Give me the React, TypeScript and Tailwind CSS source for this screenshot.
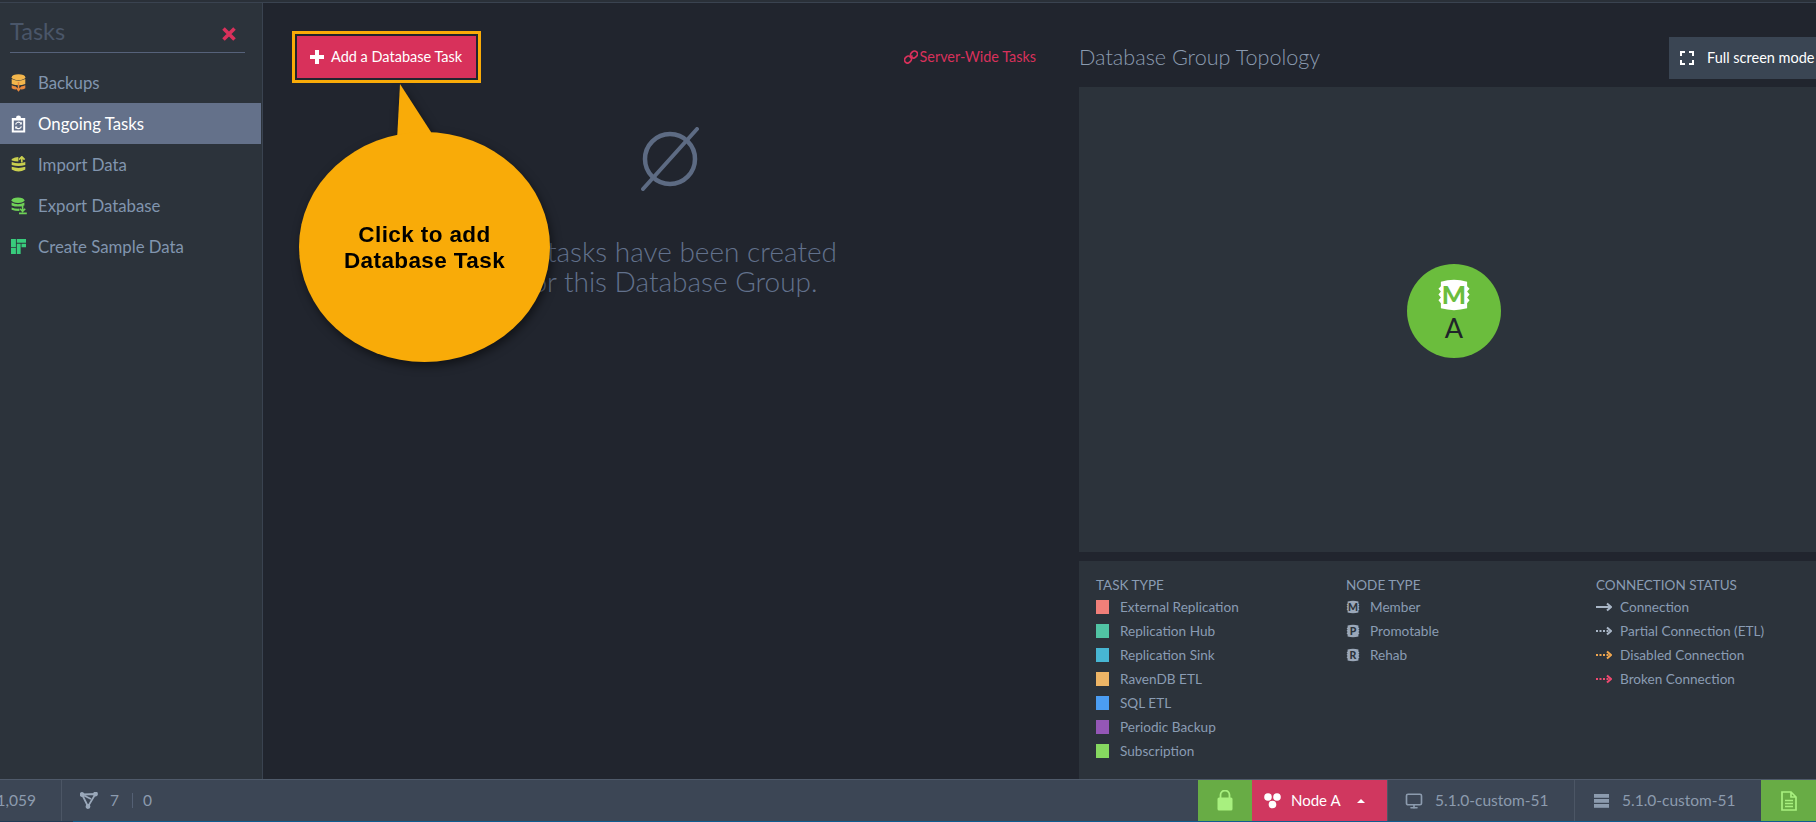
import { Monitor } from "lucide-react";

const legendTasks = [
  { name: "External Replication", color: "bg-[#f07f79]" },
  { name: "Replication Hub", color: "bg-[#51c4a4]" },
  { name: "Replication Sink", color: "bg-[#47b6d3]" },
  { name: "RavenDB ETL", color: "bg-[#edb566]" },
  { name: "SQL ETL", color: "bg-[#4b9df2]" },
  { name: "Periodic Backup", color: "bg-[#9457b6]" },
  { name: "Subscription", color: "bg-[#86d860]" },
];

const connections = [
  { name: "Connection", stroke: "#a9b6c6", dash: undefined },
  { name: "Partial Connection (ETL)", stroke: "#a9b6c6", dash: "2 1.5" },
  { name: "Disabled Connection", stroke: "#f0a64e", dash: "2 1.5" },
  { name: "Broken Connection", stroke: "#ee4a70", dash: "2 1.5" },
];

function Cylinder({ letter, fill, text, size = 14 }: { letter: string; fill: string; text: string; size?: number }) {
  return (
    <svg width={size} height={size} viewBox="0 0 14 14">
      <path
        d="M1.6 1.5 Q7 0 12.4 1.5 V3.4 L13.4 4.4 L12.4 5.6 L13.4 6.8 L12.4 8 L13.4 9.2 L12.4 10.4 V12.5 Q7 14 1.6 12.5 V10.4 L.6 9.2 L1.6 8 L.6 6.8 L1.6 5.6 L.6 4.4 L1.6 3.4 Z"
        fill={fill}
      />
      <text x="7" y="10.8" textAnchor="middle" fontSize="10.5" fontWeight="900" fontFamily="Lato, sans-serif" fill={text}>
        {letter}
      </text>
    </svg>
  );
}

function BackupsIcon() {
  return (
    <svg width="15" height="18" viewBox="0 0 15 18">
      <ellipse cx="7.5" cy="3.2" rx="6.8" ry="3" fill="#f3b64c" />
      <path d="M.7 5 Q7.5 8.6 14.3 5 V10 Q7.5 12.6 .7 10 Z" fill="#f3b64c" />
      <path d="M.7 11.2 Q2.6 12.2 5 12.5 V15.5 Q2.5 15.4 .7 14.2 Z M14.3 11.2 Q12.4 12.2 10 12.5 V15.5 Q12.5 15.4 14.3 14.2 Z" fill="#e8883c" />
      <path d="M7.5 8 V16 M5 13.5 L7.5 16.5 L10 13.5" stroke="#e8883c" strokeWidth="1.5" fill="none" />
    </svg>
  );
}

function OngoingIcon() {
  return (
    <svg width="15" height="18" viewBox="0 0 15 18">
      <path d="M.8 3 H5 Q5 .6 7.5 .6 Q10 .6 10 3 H14.2 V17.4 H.8 Z" fill="#fff" />
      <rect x="2.8" y="5.5" width="9.4" height="10" fill="#64718a" />
      <path d="M4.6 9.5 A3 3 0 0 1 10 8.5 M10.4 11.4 A3 3 0 0 1 5 12.4" stroke="#fff" strokeWidth="1.2" fill="none" />
      <path d="M10.8 6.8 V9.4 H8.4 Z M4.2 14 V11.4 H6.6 Z" fill="#fff" />
    </svg>
  );
}

function ImportIcon() {
  return (
    <svg width="15" height="17" viewBox="0 0 15 17">
      <path d="M.7 3 Q4 1 7.4 1 V5.6 Q4 5.4 .7 4.4 Z" fill="#c9cf4e" />
      <path d="M.7 6 Q7.5 8.6 14.3 6 V9 Q7.5 11 .7 9 Z M.7 10.8 Q7.5 13 14.3 10.8 V13.6 Q7.5 17.6 .7 13.6 Z" fill="#c9cf4e" />
      <path d="M10.8 6.4 V1.6 M8 3.6 L10.8 .8 L13.6 3.6" stroke="#c9cf4e" strokeWidth="1.7" fill="none" />
    </svg>
  );
}

function ExportIcon() {
  return (
    <svg width="16" height="18" viewBox="0 0 16 18">
      <ellipse cx="7" cy="3.2" rx="6.4" ry="2.8" fill="#6fd257" />
      <path d="M.6 5.6 Q7 8.8 13.4 5.6 V8.4 Q7 10.8 .6 8.4 Z M.6 10.4 Q4.5 12 8.4 11.6 V14 Q4 14 .6 12.8 Z" fill="#6fd257" />
      <path d="M11.6 9 V14 M9 11.8 L11.6 14.4 L14.2 11.8 M8 16.4 H15.8" stroke="#6fd257" strokeWidth="1.6" fill="none" />
    </svg>
  );
}

function SampleIcon() {
  return (
    <svg width="15" height="15" viewBox="0 0 14 14">
      <path d="M0 0 H4.6 V7.6 H0 Z M5.4 0 H14 V3.6 H5.4 Z M5.4 4.4 H9 V14 H5.4 Z M9.8 4.4 H14 V7.8 H9.8 Z M0 8.4 H4.6 V14 H0 Z" fill="#38cb7c" />
    </svg>
  );
}

const menu = [
  { name: "Backups", icon: <BackupsIcon /> },
  { name: "Ongoing Tasks", icon: <OngoingIcon />, active: true },
  { name: "Import Data", icon: <ImportIcon /> },
  { name: "Export Database", icon: <ExportIcon /> },
  { name: "Create Sample Data", icon: <SampleIcon /> },
];

function Sidebar() {
  return (
    <aside className="flex w-[263px] shrink-0 flex-col border-r border-[#3a4350] bg-[#2c333b]">
      <div className="mx-[10px] mt-[14px] flex h-[36px] w-[235px] items-center justify-between border-b border-[#56627a] pb-[6px]">
        <span className="text-[23.5px] font-normal text-[#4a5669]">Tasks</span>
        <svg width="16" height="16" viewBox="0 0 16 16" className="mr-[8px] mt-[4px]">
          <path d="M2.5 2.5 L13.5 13.5 M13.5 2.5 L2.5 13.5" stroke="#d8315b" strokeWidth="3.6" />
        </svg>
      </div>
      <nav className="mt-[9px] flex flex-col">
        {menu.map((m) => (
          <div
            key={m.name}
            className={`flex h-[41px] items-center text-[16.8px] ${
              m.active ? "mr-[1px] bg-[#64718a] text-white" : "text-[#8195ae]"
            }`}
          >
            <span className="flex w-[38px] shrink-0 justify-center pr-[1px]">{m.icon}</span>
            {m.name}
          </div>
        ))}
      </nav>
    </aside>
  );
}

function Callout() {
  return (
    <div className="absolute left-[36px] top-[76px] h-[283px] w-[251px] drop-shadow-[2px_4px_5px_rgba(0,0,0,0.5)]">
      <svg width="40" height="56" viewBox="0 0 40 56" className="absolute left-[96px] top-[5px]">
        <path d="M5 0 L2 56 L36 56 L36 48 Z" fill="#f9ab08" />
      </svg>
      <div className="absolute bottom-0 left-0 right-0 flex h-[230px] flex-col items-center justify-center rounded-[50%/50%] bg-[#f9ab08] pt-[2px] text-center font-['Liberation_Sans',sans-serif] text-[22.5px] font-bold leading-[26px] tracking-[0.4px] text-black">
        <span>Click to add</span>
        <span>Database Task</span>
      </div>
    </div>
  );
}

function TasksColumn() {
  return (
    <main className="relative flex w-[816px] shrink-0 flex-col pl-[29px] pr-[43px] pt-[28px]">
      <div className="flex items-center justify-between">
        <div className="border-[3px] border-[#f9ab08] bg-[#21252e] p-[2px]">
          <div className="flex h-[42px] w-[179px] items-center gap-[5px] bg-[#d8315b] pl-[11px] text-[14.5px] text-white">
            <svg width="18" height="18" viewBox="0 0 18 18" fill="#fff">
              <path d="M7 2 H11 V7 H16 V11 H11 V16 H7 V11 H2 V7 H7 Z" />
            </svg>
            Add a Database Task
          </div>
        </div>
        <div className="flex items-center gap-[2px] text-[14.4px] text-[#d8315b]">
          <svg width="14" height="14" viewBox="0 0 14 14" fill="none" stroke="#d8315b" strokeWidth="1.7">
            <path d="M6 8 L8.5 5.5" />
            <rect x="7" y="0.8" width="6" height="7.4" rx="3" transform="rotate(45 10 4.5)" />
            <rect x="1" y="5.8" width="6" height="7.4" rx="3" transform="rotate(45 4 9.5)" />
          </svg>
          Server-Wide Tasks
        </div>
      </div>
      <div className="mt-[44px] flex flex-col items-center pl-[12px] text-center text-[#62718c]">
        <svg width="60" height="64" viewBox="0 0 60 64" fill="none" stroke="#5d6b83" strokeLinecap="round" strokeWidth="4.5">
          <circle cx="30" cy="32" r="25" />
          <path d="M57 2 L3 62" strokeWidth="4" />
        </svg>
        <p className="mt-[45px] text-[28px] font-light leading-[30px]">
          No tasks have been created
          <br />
          for this Database Group.
        </p>
      </div>
      <Callout />
    </main>
  );
}

function Legend() {
  return (
    <div className="mt-[9px] flex h-[218px] bg-[#2c333b] pl-[17px] pt-[14px] text-[13.6px] text-[#8a9cb3]">
      <div className="w-[250px]">
        <div className="h-[20px] text-[13.5px]">TASK TYPE</div>
        {legendTasks.map((t) => (
          <div key={t.name} className="flex h-[24px] items-center gap-[11px]">
            <span className={`h-[14px] w-[13px] ${t.color}`} />
            {t.name}
          </div>
        ))}
      </div>
      <div className="w-[250px]">
        <div className="h-[20px] text-[13.5px]">NODE TYPE</div>
        {["Member", "Promotable", "Rehab"].map((n) => (
          <div key={n} className="flex h-[24px] items-center gap-[10px]">
            <Cylinder letter={n[0]} fill="#9aa7b8" text="#2c333b" size={14} />
            {n}
          </div>
        ))}
      </div>
      <div>
        <div className="h-[20px] text-[13.5px]">CONNECTION STATUS</div>
        {connections.map((c) => (
          <div key={c.name} className="flex h-[24px] items-center gap-[8px]">
            <svg width="16" height="10" viewBox="0 0 16 10" fill="none" stroke={c.stroke} strokeWidth="2">
              <path d="M0 5 H14" strokeDasharray={c.dash} />
              <path d="M11 1.5 L15 5 L11 8.5" />
            </svg>
            {c.name}
          </div>
        ))}
      </div>
    </div>
  );
}

function Topology() {
  return (
    <section className="flex min-w-0 flex-1 flex-col overflow-hidden">
      <div className="flex h-[84px] items-center justify-between pt-[25px]">
        <h2 className="text-[21.6px] font-light text-[#8b9bb0]">Database Group Topology</h2>
        <div className="mr-[-10px] flex h-[42px] w-[157px] shrink-0 items-center gap-[13px] bg-[#3a4553] pl-[11px] text-[14.5px] text-white">
          <svg width="14" height="14" viewBox="0 0 14 14" fill="none" stroke="#fff" strokeWidth="2">
            <path d="M1 5 V1 H5 M9 1 H13 V5 M13 9 V13 H9 M5 13 H1 V9" />
          </svg>
          Full screen mode
        </div>
      </div>
      <div className="flex h-[465px] items-center justify-center bg-[#2c333b] pb-[18px] pl-[13px]">
        <div className="flex h-[94px] w-[94px] flex-col items-center justify-center rounded-full bg-[#6bbd3d]">
          <Cylinder letter="M" fill="#fff" text="#6bbd3d" size={34} />
          <span className="mt-[1px] text-[27px] leading-[30px] text-[#20242a]">A</span>
        </div>
      </div>
      <Legend />
    </section>
  );
}

function StatusBar() {
  return (
    <footer className="flex h-[43px] shrink-0 flex-col border-t border-[#4f5a6a] bg-[#3c4655] text-[15.5px] text-[#8c9bae]">
      <div className="flex min-h-0 flex-1">
        <div className="flex w-[62px] items-center justify-end overflow-hidden border-r border-[#4c5665] pr-[25px]">
          <span className="shrink-0">1,059</span>
        </div>
        <div className="flex items-center pl-[18px]">
          <svg width="18" height="18" viewBox="0 0 18 18" fill="none" stroke="#9aa8ba" strokeWidth="1.8">
            <path d="M2 2.5 L15.5 2 L8 14.5 Z M2 2.5 L11 7" />
            <circle cx="2" cy="2.5" r="1.5" fill="#9aa8ba" />
            <circle cx="15.5" cy="2" r="1.5" fill="#9aa8ba" />
            <circle cx="8" cy="14.5" r="1.5" fill="#9aa8ba" />
          </svg>
          <span className="ml-[12px]">7</span>
          <span className="ml-[13px] mr-[10px] h-[15px] w-px bg-[#546074]" />
          <span>0</span>
        </div>
        <div className="ml-auto flex">
          <div className="flex w-[54px] items-center justify-center bg-[#68ac45]">
            <svg width="16" height="21" viewBox="0 0 16 21">
              <path d="M3.5 8 V5 A4.5 4.5 0 0 1 12.5 5 V8" fill="none" stroke="#a8f07f" strokeWidth="1.8" />
              <rect x="0.5" y="7.5" width="15" height="13" rx="1.5" fill="#a8f07f" />
            </svg>
          </div>
          <div className="flex w-[135px] items-center bg-[#d0375f] pl-[12px] text-[15px] text-white">
            <svg width="17" height="17" viewBox="0 0 17 17" fill="#fff">
              <circle cx="4" cy="5" r="3.8" />
              <circle cx="13" cy="5" r="3.8" />
              <circle cx="8.5" cy="12.5" r="3.8" />
            </svg>
            <span className="ml-[10px]">Node A</span>
            <span className="ml-[16px] h-0 w-0 border-x-[4px] border-b-[4px] border-x-transparent border-b-white" />
          </div>
          <div className="flex w-[188px] items-center border-x border-[#4c5665] pl-[17px]">
            <Monitor size={18} strokeWidth={2.2} className="text-[#8c9bae]" />
            <span className="ml-[12px]">5.1.0-custom-51</span>
          </div>
          <div className="flex w-[186px] items-center pl-[19px]">
            <svg width="15" height="14" viewBox="0 0 15 14" fill="#8c9bae">
              <rect width="15" height="3.8" />
              <rect y="5" width="15" height="3.8" />
              <rect y="10" width="15" height="3.8" />
            </svg>
            <span className="ml-[13px]">5.1.0-custom-51</span>
          </div>
          <div className="flex w-[55px] items-center justify-center bg-[#68ac45]">
            <svg width="16" height="20" viewBox="0 0 16 20" fill="none" stroke="#a8f07f" strokeWidth="1.7">
              <path d="M1 1 H10 L15 6 V19 H1 Z M10 1 V6 H15 M4 9.5 H12 M4 12.5 H12 M4 15.5 H12" />
            </svg>
          </div>
        </div>
      </div>
      <div className="flex h-px shrink-0">
        <div className="w-[73px] bg-[#213a55]" />
        <div className="flex-1 bg-[#0f5c90]" />
      </div>
    </footer>
  );
}

export default function App() {
  return (
    <div className="flex h-[822px] w-[1816px] flex-col overflow-hidden bg-[#21252e] font-['Lato','Noto_Sans',sans-serif]">
      <div className="h-[3px] shrink-0 border-b border-[#3a4350] bg-[#2a3038]" />
      <div className="flex min-h-0 flex-1">
        <Sidebar />
        <TasksColumn />
        <Topology />
      </div>
      <StatusBar />
    </div>
  );
}
